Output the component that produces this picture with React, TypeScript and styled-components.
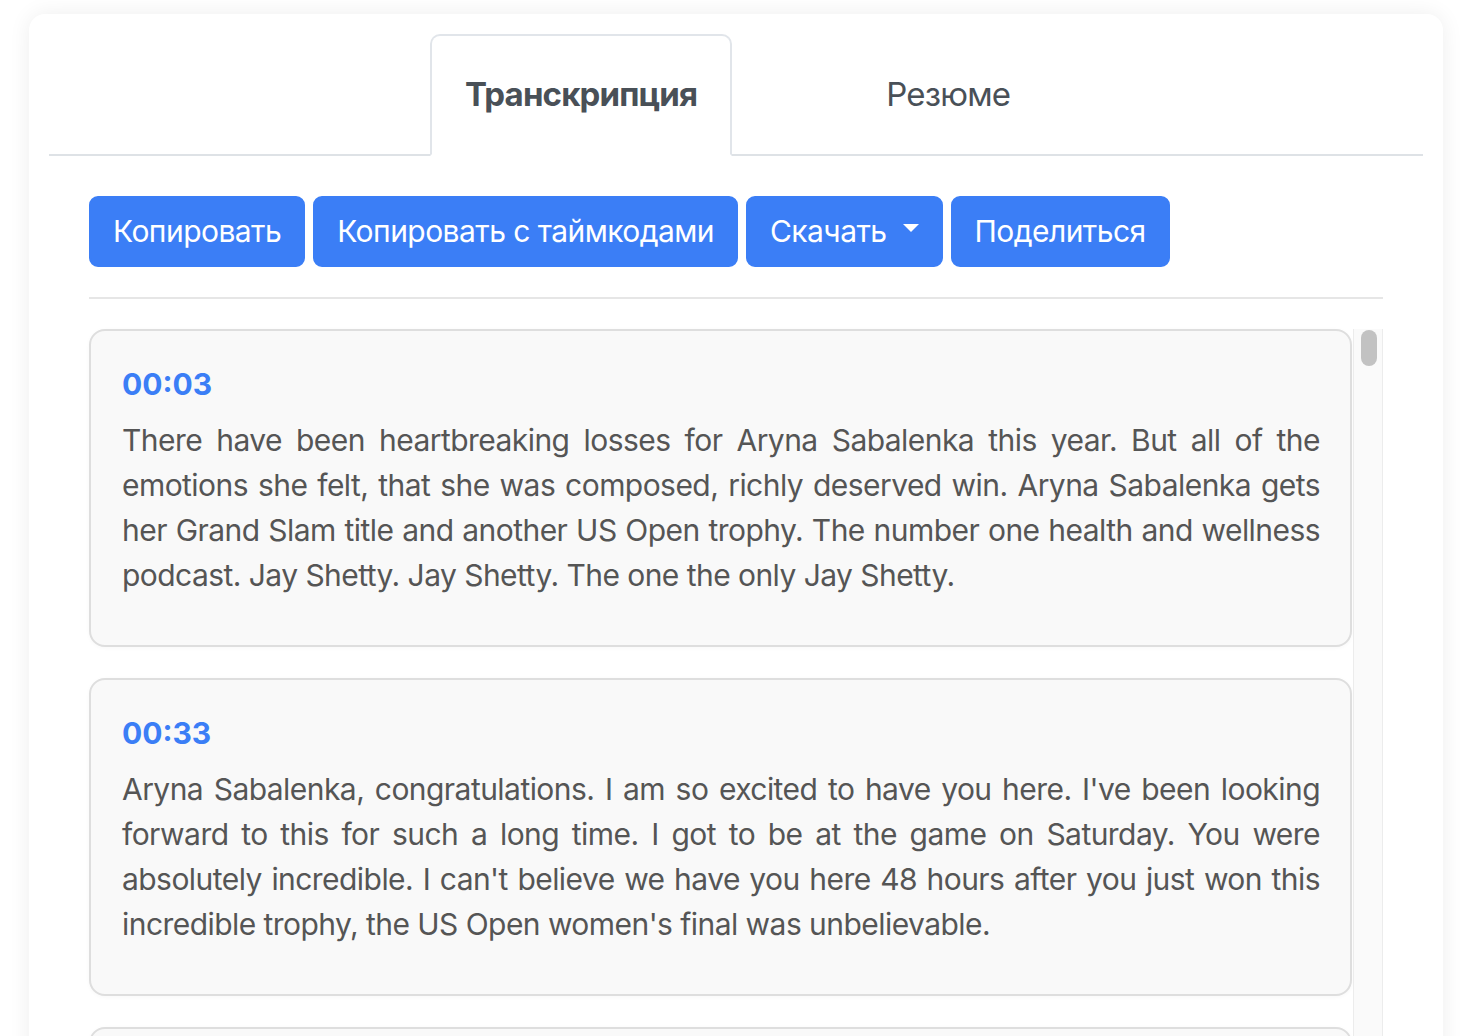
import React from "react";
import styled, { createGlobalStyle, css } from "styled-components";

const GlobalStyle = createGlobalStyle`
  html, body { margin: 0; padding: 0; background: #ffffff; }
  body { font-family: Inter, "Noto Sans", "Liberation Sans", sans-serif; -webkit-font-smoothing: antialiased; }
  * { box-sizing: border-box; }
`;

const Page = styled.div`
  padding: 14px 37px 40px 29px;
`;

const Card = styled.div`
  width: 1414px;
  background: #fff;
  border-radius: 16px;
  box-shadow: 0 0 22px rgba(0, 0, 0, 0.07);
  padding: 20px 20px 40px;
`;

const TabNav = styled.nav`
  display: flex;
  align-items: flex-end;
  gap: 119px;
  padding-left: 381px;
  border-bottom: 2px solid #dee2e6;
`;

const Tab = styled.button<{ $active?: boolean }>`
  margin-bottom: -2px;
  padding: 34px 33px;
  font-family: inherit;
  font-size: 33px;
  line-height: 1.5;
  letter-spacing: -0.85px;
  color: #495057;
  background: transparent;
  border: 2px solid transparent;
  border-radius: 10px 10px 0 0;
  font-weight: 400;
  cursor: pointer;
  ${(p) =>
    p.$active &&
    css`
      font-weight: 700;
      background: #fff;
      border-color: #e1e5ea #e1e5ea #fff;
    `}
`;

const Pane = styled.div`
  padding: 40px 40px 0;
`;

const Toolbar = styled.div`
  display: flex;
  gap: 8px;
`;

const ActionButton = styled.button`
  display: inline-flex;
  align-items: center;
  font-family: inherit;
  font-size: 30px;
  line-height: 1.5;
  letter-spacing: -0.55px;
  color: #fff;
  background: #3b7ef6;
  border: 2px solid #3b7ef6;
  border-radius: 9px;
  padding: 11px 22px;
  cursor: pointer;
`;

const Caret = styled.span`
  display: inline-block;
  margin-left: 16px;
  width: 0;
  height: 0;
  border-top: 8px solid #fff;
  border-left: 8px solid transparent;
  border-right: 8px solid transparent;
  transform: translateY(-3px);
`;

const Rule = styled.hr`
  border: 0;
  border-top: 2px solid #e6e6e6;
  margin: 30px 0 30px;
`;

const Scroller = styled.div`
  display: flex;
  align-items: stretch;
`;

const List = styled.div`
  flex: 1;
  display: flex;
  flex-direction: column;
  gap: 31px;
  padding-right: 1px;
`;

const Segment = styled.article`
  background: #f9f9f9;
  border: 2px solid #dedede;
  border-radius: 16px;
  padding: 35px 30px 32px 31px;
  box-shadow: 0 1px 4px rgba(0, 0, 0, 0.03);
`;

const Stamp = styled.div`
  font-size: 30px;
  font-weight: 700;
  line-height: 36px;
  color: #3b7ef6;
  margin-bottom: 16px;
`;

const Text = styled.p`
  margin: 0 0 15px;
  font-size: 30px;
  line-height: 45px;
  letter-spacing: -0.55px;
  color: #555;
  text-align: justify;
`;

const Track = styled.div`
  position: relative;
  width: 30px;
  flex: none;
  background: #fafafa;
  border-left: 1px solid #ececec;
  border-right: 1px solid #ececec;
`;

const Thumb = styled.div`
  position: absolute;
  top: 1px;
  left: 7px;
  width: 16px;
  height: 36px;
  border-radius: 8px;
  background: #c2c2c2;
`;

const segments = [
  {
    time: "00:03",
    text: "There have been heartbreaking losses for Aryna Sabalenka this year. But all of the emotions she felt, that she was composed, richly deserved win. Aryna Sabalenka gets her Grand Slam title and another US Open trophy. The number one health and wellness podcast. Jay Shetty. Jay Shetty. The one the only Jay Shetty.",
  },
  {
    time: "00:33",
    text: "Aryna Sabalenka, congratulations. I am so excited to have you here. I've been looking forward to this for such a long time. I got to be at the game on Saturday. You were absolutely incredible. I can't believe we have you here 48 hours after you just won this incredible trophy, the US Open women's final was unbelievable.",
  },
  {
    time: "01:02",
    text: "Thank you so much. I'm really happy to be here and to talk with you about everything that happened this year.",
  },
];

export default function App() {
  return (
    <>
      <GlobalStyle />
      <Page>
        <Card>
          <TabNav>
            <Tab $active>Транскрипция</Tab>
            <Tab>Резюме</Tab>
          </TabNav>
          <Pane>
            <Toolbar>
              <ActionButton>Копировать</ActionButton>
              <ActionButton>Копировать с таймкодами</ActionButton>
              <ActionButton>
                Скачать
                <Caret />
              </ActionButton>
              <ActionButton>Поделиться</ActionButton>
            </Toolbar>
            <Rule />
            <Scroller>
              <List>
                {segments.map((s) => (
                  <Segment key={s.time}>
                    <Stamp>{s.time}</Stamp>
                    <Text>{s.text}</Text>
                  </Segment>
                ))}
              </List>
              <Track>
                <Thumb />
              </Track>
            </Scroller>
          </Pane>
        </Card>
      </Page>
    </>
  );
}
